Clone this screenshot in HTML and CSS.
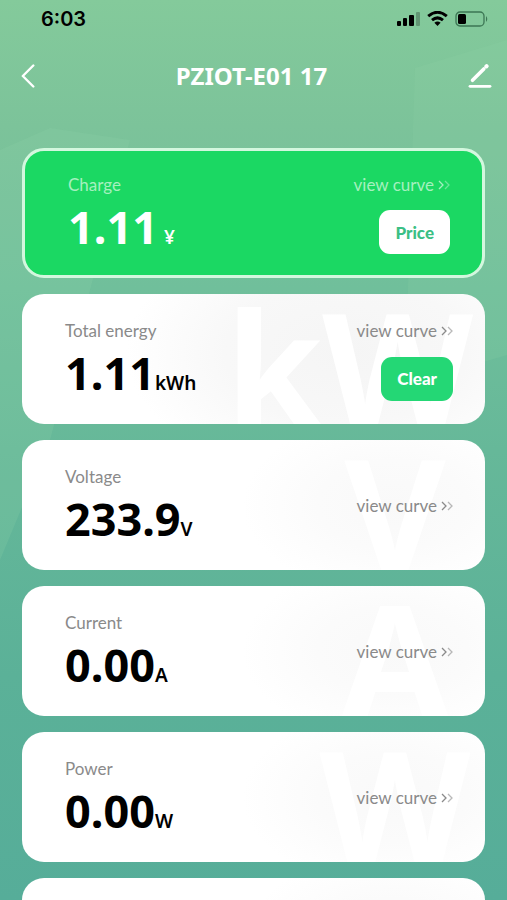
FILE: index.html
```html
<!DOCTYPE html>
<html lang="en">
  <head>
    <meta charset="UTF-8" />
    <meta name="viewport" content="width=device-width, initial-scale=1.0" />
    <title>PZIOT-E01 17</title>
    <link rel="stylesheet" href="styles.css" />
  </head>
  <body>
    <div class="screen">
      <!-- background shapes -->
      <svg class="backdrop" viewBox="0 0 507 900" preserveAspectRatio="none" aria-hidden="true">
        <path d="M415 68 L507 40 V355 L405 385 Z" fill="#8fd3a9" opacity=".18" />
        <path d="M0 150 L50 128 L130 140 L50 440 L0 560 Z" fill="#8fd3a9" opacity=".22" />
      </svg>

      <div class="status-bar">
        <span class="time">6:03</span>
        <div class="status-icons">
          <svg width="23" height="14" viewBox="0 0 23 14" aria-hidden="true">
            <rect x="0" y="9" width="4" height="5" rx="1" />
            <rect x="6" y="6" width="4" height="8" rx="1" />
            <rect x="12" y="3" width="5" height="11" rx="1" />
            <rect x="19" y="0" width="4" height="14" rx="1" opacity=".25" />
          </svg>
          <svg width="21" height="15" viewBox="0 0 21 15" fill="none" stroke="#000" stroke-width="3" aria-hidden="true">
            <path d="M1.2 5.2 Q10.5 -2.6 19.8 5.2" />
            <path d="M5 9.2 Q10.5 4.6 16 9.2" />
            <path d="M7.4 11.8 Q10.5 9.4 13.6 11.8 L10.5 15 Z" fill="#000" stroke="none" />
          </svg>
          <svg width="34" height="16" viewBox="0 0 34 16" aria-hidden="true">
            <rect x="1" y="1" width="28" height="14" rx="4" fill="none" stroke="#3c7654" stroke-width="1.3" />
            <path d="M31 5 Q33.5 8 31 11 Z" fill="#3c7654" />
            <rect x="3" y="3" width="8" height="10" rx="1.5" />
          </svg>
        </div>
      </div>

      <header class="title-bar">
        <button class="icon-button" aria-label="Back">
          <svg width="14" height="24" viewBox="0 0 14 24" fill="none" stroke="#fff" stroke-width="2.4" stroke-linecap="round" stroke-linejoin="round">
            <path d="M12.3 1.5 L1.8 12 L12.3 22.5" />
          </svg>
        </button>
        <h1 class="title">PZIOT-E01 17</h1>
        <button class="icon-button" aria-label="Edit">
          <svg width="24" height="24" viewBox="0 0 24 24" fill="none" stroke="#fff" stroke-linecap="round">
            <path d="M4.5 16.3 L15.8 5" stroke-width="3.6" />
            <path d="M18.3 2.5 L18.6 2.2" stroke-width="4" />
            <path d="M2 22.3 H22" stroke-width="2.8" />
          </svg>
        </button>
      </header>

      <main class="card-list">
        <article class="card card-charge">
          <div class="reading">
            <h2 class="label">Charge</h2>
            <p class="value">1.11<span class="unit unit-yen">¥</span></p>
          </div>
          <div class="actions">
            <a class="curve-link" href="#">view curve
              <svg class="chevrons" viewBox="0 0 12 10"><path d="M1 1 L5 5 L1 9" /><path d="M7 1 L11 5 L7 9" opacity=".6" /></svg></a>
            <button class="button button-price">Price</button>
          </div>
        </article>

        <article class="card card-energy">
          <span class="watermark" aria-hidden="true">kW</span>
          <div class="reading">
            <h2 class="label">Total energy</h2>
            <p class="value">1.11<span class="unit">kWh</span></p>
          </div>
          <div class="actions">
            <a class="curve-link" href="#">view curve
              <svg class="chevrons" viewBox="0 0 12 10"><path d="M1 1 L5 5 L1 9" /><path d="M7 1 L11 5 L7 9" opacity=".6" /></svg></a>
            <button class="button button-clear">Clear</button>
          </div>
        </article>

        <article class="card">
          <span class="watermark" aria-hidden="true">V</span>
          <div class="reading">
            <h2 class="label">Voltage</h2>
            <p class="value">233.9<span class="unit">V</span></p>
          </div>
          <div class="actions">
            <a class="curve-link" href="#">view curve
              <svg class="chevrons" viewBox="0 0 12 10"><path d="M1 1 L5 5 L1 9" /><path d="M7 1 L11 5 L7 9" opacity=".6" /></svg></a>
          </div>
        </article>

        <article class="card">
          <span class="watermark" aria-hidden="true">A</span>
          <div class="reading">
            <h2 class="label">Current</h2>
            <p class="value">0.00<span class="unit">A</span></p>
          </div>
          <div class="actions">
            <a class="curve-link" href="#">view curve
              <svg class="chevrons" viewBox="0 0 12 10"><path d="M1 1 L5 5 L1 9" /><path d="M7 1 L11 5 L7 9" opacity=".6" /></svg></a>
          </div>
        </article>

        <article class="card">
          <span class="watermark" aria-hidden="true">W</span>
          <div class="reading">
            <h2 class="label">Power</h2>
            <p class="value">0.00<span class="unit">W</span></p>
          </div>
          <div class="actions">
            <a class="curve-link" href="#">view curve
              <svg class="chevrons" viewBox="0 0 12 10"><path d="M1 1 L5 5 L1 9" /><path d="M7 1 L11 5 L7 9" opacity=".6" /></svg></a>
          </div>
        </article>

        <article class="card"></article>
      </main>
    </div>
  </body>
</html>
```

FILE: styles.css
```css
* {
  margin: 0;
  padding: 0;
  box-sizing: border-box;
}

body {
  font-family: Lato, "Noto Sans", sans-serif;
  color: #000;
}

.screen {
  position: relative;
  display: flex;
  flex-direction: column;
  height: 100vh;
  overflow: hidden;
  background: linear-gradient(180deg, #84ca9b 0%, #7cc39a 14%, #70bf9b 32%, #66b899 50%, #5bb198 75%, #56ad99 100%);
}

.backdrop {
  position: absolute;
  inset: 0;
  width: 100%;
  height: 100%;
}

.status-bar,
.title-bar,
.card-list {
  position: relative;
}

/* status bar */
.status-bar {
  display: flex;
  align-items: center;
  justify-content: space-between;
  height: 37px;
  padding: 0 18px 0 41px;
  flex-shrink: 0;
}

.time {
  font-family: Inter, sans-serif;
  font-size: 20px;
  font-weight: 600;
}

.status-icons {
  display: flex;
  align-items: center;
  gap: 7px;
}

/* title bar */
.title-bar {
  display: flex;
  align-items: center;
  justify-content: space-between;
  height: 79px;
  padding: 0 15px 2px 21px;
  flex-shrink: 0;
}

.icon-button {
  display: flex;
  background: none;
  border: none;
  cursor: pointer;
}

.title {
  font-family: "Noto Sans", sans-serif;
  font-size: 24px;
  font-weight: 700;
  color: #fff;
}

/* cards */
.card-list {
  display: flex;
  flex-direction: column;
  gap: 16px;
  flex: 1;
  min-height: 0;
  padding: 32px 22px 0;
  overflow-y: auto;
  scrollbar-width: none;
}

.card {
  position: relative;
  display: flex;
  justify-content: space-between;
  height: 130px;
  padding: 0 32px 0 43px;
  flex-shrink: 0;
  border-radius: 22px;
  overflow: hidden;
  background: radial-gradient(ellipse 150px 90px at 80% 50%, #f9f9f9 0%, #fbfbfb 50%, #fff 100%) #fff;
}

.card-energy {
  background: radial-gradient(ellipse 220px 130px at 70% 45%, #f5f5f5 0%, #f8f8f8 55%, #fff 100%) #fff;
}

.card-charge {
  background: #1bd863;
  border: 3px solid #d3f7de;
}

.watermark {
  position: absolute;
  top: 0;
  right: 12px;
  min-width: 156px;
  font-family: "Noto Sans", sans-serif;
  font-size: 156px;
  font-weight: 700;
  line-height: 144px;
  text-align: center;
  color: #fff;
}

.reading {
  position: relative;
  display: flex;
  flex-direction: column;
  padding-top: 26px;
}

.card-charge .reading {
  padding-top: 23px;
}

.label {
  font-size: 17px;
  font-weight: 400;
  line-height: 22px;
  color: #8a8a8a;
}

.value {
  font-family: "Noto Sans", sans-serif;
  font-size: 45px;
  font-weight: 700;
  line-height: 62px;
}

.unit {
  font-size: 19px;
  font-weight: 600;
}

.unit-yen {
  padding-left: 6px;
}

.actions {
  position: relative;
  display: flex;
  flex-direction: column;
  align-items: flex-end;
  justify-content: center;
  gap: 15px;
  padding-top: 2px;
}

.card-charge .actions {
  gap: 14px;
}

.curve-link {
  display: flex;
  align-items: center;
  gap: 4px;
  font-size: 17px;
  line-height: 22px;
  color: #8a8a8a;
  text-decoration: none;
}

.chevrons {
  width: 12px;
  height: 10px;
  fill: none;
  stroke: currentColor;
  stroke-width: 1.3;
}

.card-charge .value {
  color: #fff;
}

.card-charge .label,
.card-charge .curve-link {
  color: #a5f0bf;
}

.button {
  height: 44px;
  padding: 0 16px;
  border: none;
  border-radius: 11px;
  font-family: inherit;
  font-size: 17px;
  font-weight: 900;
  cursor: pointer;
}

.button-price {
  background: #fff;
  color: #3cbf85;
}

.button-clear {
  background: #24d775;
  color: #fff;
}
```
